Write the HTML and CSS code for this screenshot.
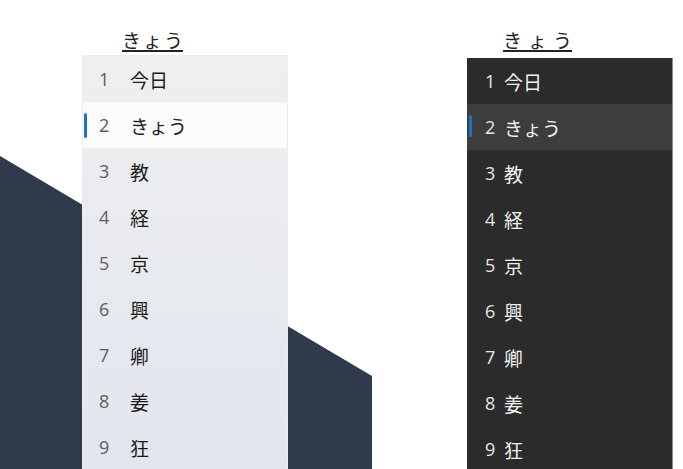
FILE: index.html
```html
<!DOCTYPE html>
<html lang="ja">
<head>
    <meta charset="utf-8" />
    <title>IME 候補ウィンドウ</title>
    <link rel="stylesheet" href="styles.css">
</head>
<body>
<div class="backdrop"></div>
<div class="stage">
    <div class="ime light">
        <div class="comp"><span class="comp-text">きょ<span class="last">う</span></span></div>
        <ol class="cands">
            <li><span class="num">1</span><span class="word">今日</span></li>
            <li class="sel"><span class="num">2</span><span class="word">きょう</span></li>
            <li><span class="num">3</span><span class="word">教</span></li>
            <li><span class="num">4</span><span class="word">経</span></li>
            <li><span class="num">5</span><span class="word">京</span></li>
            <li><span class="num">6</span><span class="word">興</span></li>
            <li><span class="num">7</span><span class="word">卿</span></li>
            <li><span class="num">8</span><span class="word">姜</span></li>
            <li><span class="num">9</span><span class="word">狂</span></li>
        </ol>
    </div>
    <div class="ime dark">
        <div class="comp"><span class="comp-text">きょ<span class="last">う</span></span></div>
        <ol class="cands">
            <li><span class="num">1</span><span class="word">今日</span></li>
            <li class="sel"><span class="num">2</span><span class="word">きょう</span></li>
            <li><span class="num">3</span><span class="word">教</span></li>
            <li><span class="num">4</span><span class="word">経</span></li>
            <li><span class="num">5</span><span class="word">京</span></li>
            <li><span class="num">6</span><span class="word">興</span></li>
            <li><span class="num">7</span><span class="word">卿</span></li>
            <li><span class="num">8</span><span class="word">姜</span></li>
            <li><span class="num">9</span><span class="word">狂</span></li>
        </ol>
    </div>
</div>
</body>
</html>
```

FILE: styles.css
```css
html, body {
    margin: 0;
    height: 100%;
    overflow: hidden;
}
body {
    background: #fff;
    font-family: "Noto Sans CJK JP", "Noto Sans", sans-serif;
    position: relative;
}
/* dark slanted shape behind the light window */
.backdrop {
    position: absolute;
    left: 0;
    top: 0;
    width: 372px;
    height: 469px;
    background: #2f3a4c;
    clip-path: polygon(0 156px, 372px 376px, 372px 469px, 0 469px);
}
.stage {
    position: relative;
    display: flex;
    gap: 180px;
    padding-left: 83px;
}
.ime {
    width: 204px;
}
.ime.dark {
    width: 206px;
}
.comp {
    height: 56px;
    box-sizing: border-box;
    padding-top: 29px;
    padding-left: 39px;
}
.dark .comp {
    height: 58px;
    padding-left: 36px;
}
.comp-text {
    display: inline-block;
    font-size: 19px;
    line-height: 21px;
    color: #222;
    letter-spacing: 2px;
    border-bottom: 2px solid #222;
}
.dark .comp-text {
    letter-spacing: 6px;
}
.comp-text .last {
    letter-spacing: 0;
}
.cands {
    list-style: none;
    margin: 0;
    padding: 0;
    height: 420px;
}
.light .cands {
    background: linear-gradient(#efefef, #e9ebef 40%, #e1e6ee);
    box-shadow: 0 0 0 1px #ececec;
}
.dark .cands {
    background: #2b2b2b;
    border-right: 1px solid #8a8a8a;
    height: 411px;
}
.cands li {
    display: flex;
    align-items: center;
    height: 46px;
    position: relative;
}
.num {
    font-family: "Open Sans", "Noto Sans", sans-serif;
    font-size: 18px;
}
.word {
    font-size: 19px;
}
.light li {
    padding-left: 16px;
    color: #1c1c1c;
}
.light .num {
    width: 31px;
    color: #5e5e5e;
}
.light li.sel {
    background: #fbfbfb;
}
.dark li {
    padding-left: 18px;
    color: #f0f0f0;
}
.dark .num {
    width: 19px;
    color: #e6e6e6;
}
.dark li.sel {
    background: #3d3d3d;
}
.sel::before {
    content: "";
    position: absolute;
    left: 1px;
    top: 11px;
    width: 3px;
    height: 25px;
    border-radius: 2px;
    background: #1a74cc;
}
.dark .sel::before {
    left: 2px;
    top: 11px;
    height: 22px;
}
```
